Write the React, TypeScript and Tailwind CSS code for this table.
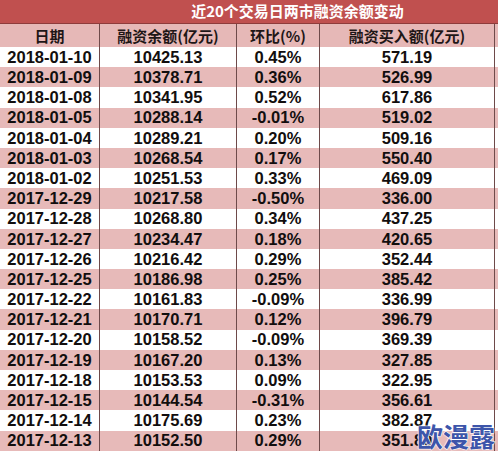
const rows: [string, string, string, string][] = [
  ['2018-01-10', '10425.13', '0.45%', '571.19'],
  ['2018-01-09', '10378.71', '0.36%', '526.99'],
  ['2018-01-08', '10341.95', '0.52%', '617.86'],
  ['2018-01-05', '10288.14', '-0.01%', '519.02'],
  ['2018-01-04', '10289.21', '0.20%', '509.16'],
  ['2018-01-03', '10268.54', '0.17%', '550.40'],
  ['2018-01-02', '10251.53', '0.33%', '469.09'],
  ['2017-12-29', '10217.58', '-0.50%', '336.00'],
  ['2017-12-28', '10268.80', '0.34%', '437.25'],
  ['2017-12-27', '10234.47', '0.18%', '420.65'],
  ['2017-12-26', '10216.42', '0.29%', '352.44'],
  ['2017-12-25', '10186.98', '0.25%', '385.42'],
  ['2017-12-22', '10161.83', '-0.09%', '336.99'],
  ['2017-12-21', '10170.71', '0.12%', '396.79'],
  ['2017-12-20', '10158.52', '-0.09%', '369.39'],
  ['2017-12-19', '10167.20', '0.13%', '327.85'],
  ['2017-12-18', '10153.53', '0.09%', '322.95'],
  ['2017-12-15', '10144.54', '-0.31%', '356.61'],
  ['2017-12-14', '10175.69', '0.23%', '382.87'],
  ['2017-12-13', '10152.50', '0.29%', '351.80'],
]

const cjk = "font-['Noto_Sans_CJK_SC',sans-serif]"
const num = "font-['Liberation_Sans','Noto_Sans_CJK_SC',sans-serif]"

function Cells({ cells }: { cells: string[] }) {
  return (
    <>
      <div className="w-[100px] flex items-center justify-center border-r border-[#6e4a4a]">
        {cells[0]}
      </div>
      <div className="w-[137px] flex items-center justify-center border-r border-[#6e4a4a]">
        {cells[1]}
      </div>
      <div className="w-[83px] flex items-center justify-center border-r border-[#6e4a4a]">
        {cells[2]}
      </div>
      <div className="w-[175px] flex items-center justify-center border-r border-[#6e4a4a]">
        {cells[3]}
      </div>
    </>
  )
}

export default function App() {
  return (
    <div className="relative w-[498px] h-[451px] overflow-hidden bg-white text-[#120e0e]">
      <div className="flex h-[24px] bg-[#c0504f] border-b border-[#8e3b3b]">
        <div className="w-[100px]" />
        <div
          className={`w-[395px] flex items-center justify-center text-white text-[15px] font-bold ${cjk}`}
        >
          近20个交易日两市融资余额变动
        </div>
      </div>

      <div className={`flex h-[23px] bg-[#e6b8b7] text-[15px] font-bold leading-none text-[#1e1616] ${cjk}`}>
        <Cells cells={['日期', '融资余额(亿元)', '环比(%)', '融资买入额(亿元)']} />
      </div>

      {rows.map((row, i) => (
        <div
          key={row[0]}
          className={`flex h-[20.2px] text-[16.5px] font-bold leading-none ${num} ${
            i % 2 === 1 ? 'bg-[#e7bab9]' : 'bg-white'
          }`}
        >
          <Cells cells={row} />
        </div>
      ))}

      <div
        className={`absolute right-[3px] bottom-[2px] text-[26px] leading-none font-bold text-[#3d55aa] ${cjk} [-webkit-text-stroke:1px_white] [paint-order:stroke_fill] [text-shadow:0_0_2px_white]`}
      >
        欧漫露
      </div>
    </div>
  )
}
